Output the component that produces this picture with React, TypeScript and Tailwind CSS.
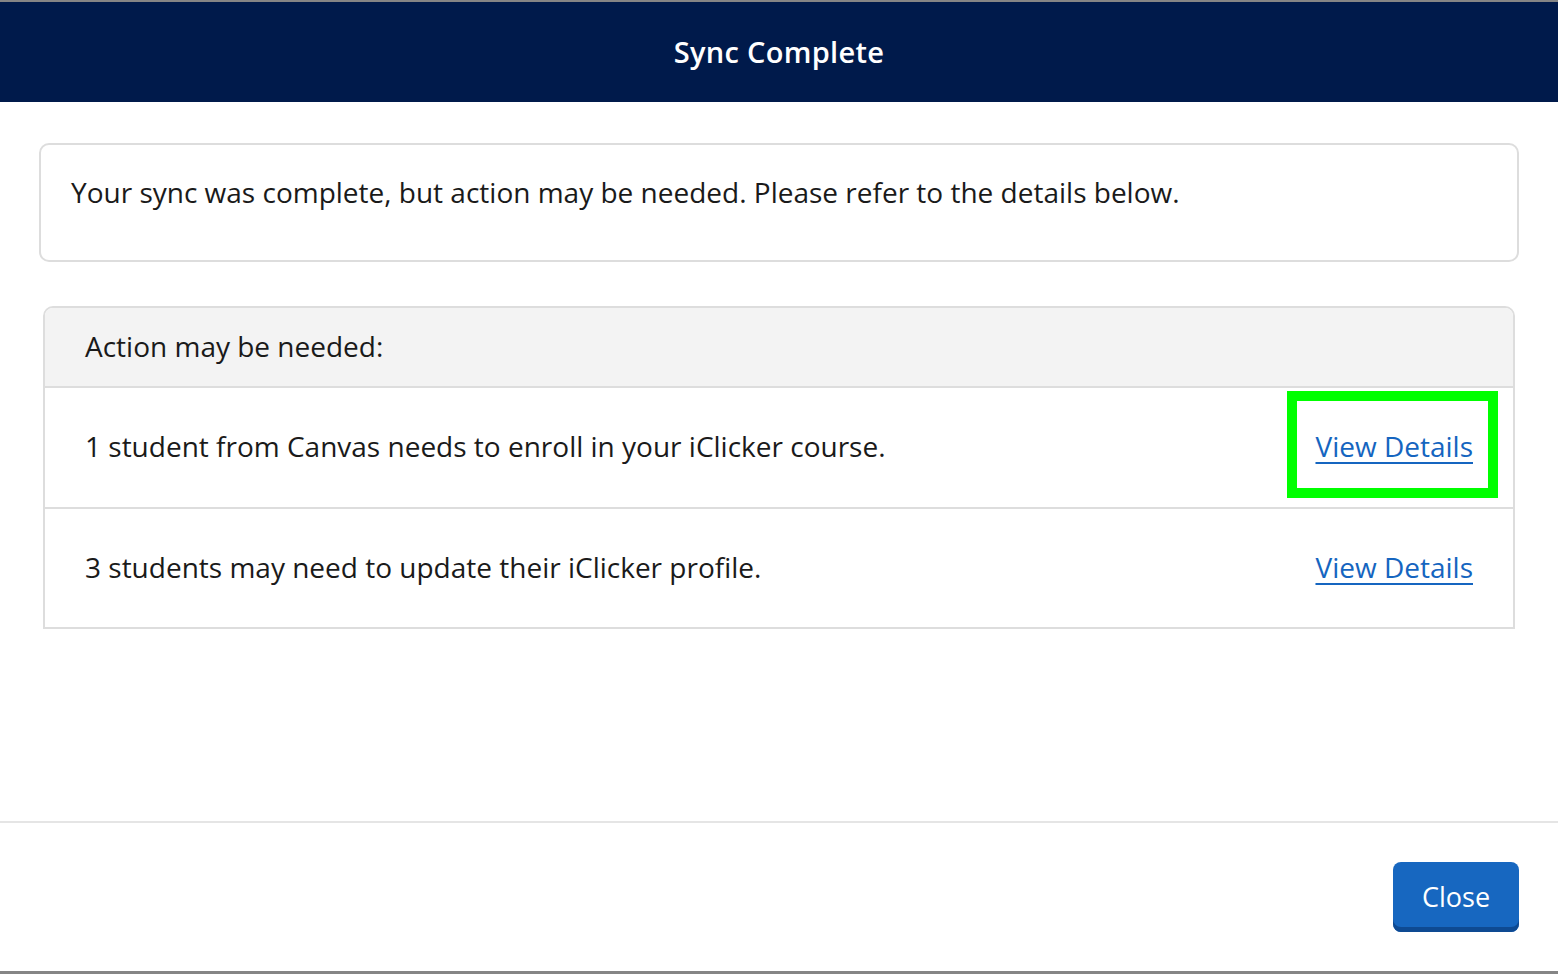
const rows = [
  { id: 'enroll', text: '1 student from Canvas needs to enroll in your iClicker course.', highlighted: true },
  { id: 'profile', text: '3 students may need to update their iClicker profile.', highlighted: false },
]

export default function App() {
  return (
    <div className="h-[974px] w-full flex flex-col bg-white text-[#1a1a1a] font-['Open_Sans',sans-serif] border-t-2 border-b-[3px] border-[#858585] overflow-hidden">
      {/* HEADER */}
      <div className="h-[100px] shrink-0 bg-[#001a4b] flex items-center justify-center">
        <h1 className="text-[29px] font-semibold text-white tracking-[0.3px]">Sync Complete</h1>
      </div>

      {/* BODY */}
      <div className="flex-1 px-[39px] pt-[41px]">
        <div className="h-[119px] border-2 border-[#dddddd] rounded-[10px] pt-[28px] pl-[30px]">
          <p className="text-[28px] leading-[38px]">
            Your sync was complete, but action may be needed. Please refer to the details below.
          </p>
        </div>

        <div className="mt-[44px] mx-[4px] border-2 border-[#dddddd] rounded-t-[10px]">
          <div className="h-[80px] bg-[#f3f3f3] border-b-2 border-[#dddddd] flex items-center pl-[40px] pb-[2px] rounded-t-[8px]">
            <span className="text-[28px]">Action may be needed:</span>
          </div>
          {rows.map((row, i) => (
            <div
              key={row.id}
              className={`flex items-center justify-between pl-[40px] pr-[40px] pb-[3px] ${i > 0 ? 'h-[120px] border-t-2 border-[#dddddd]' : 'h-[119px]'}`}
            >
              <span className="text-[28px]">{row.text}</span>
              <span className="relative">
                <a href="#" className="text-[28px] leading-[38px] text-[#1565c0] underline underline-offset-[5px] decoration-2">
                  View Details
                </a>
                {row.highlighted && (
                  <span className="absolute -left-[28px] -right-[25px] -top-[36px] -bottom-[33px] border-[10px] border-[#00ff00] pointer-events-none" />
                )}
              </span>
            </div>
          ))}
        </div>
      </div>

      {/* FOOTER */}
      <div className="h-[150px] shrink-0 border-t-2 border-[#e5e5e5] flex items-center justify-end pr-[39px]">
        <button className="h-[70px] w-[126px] rounded-[8px] bg-[#1767c0] text-white text-[27px] shadow-[inset_0_-5px_0_#0e4a92]">
          Close
        </button>
      </div>
    </div>
  )
}
